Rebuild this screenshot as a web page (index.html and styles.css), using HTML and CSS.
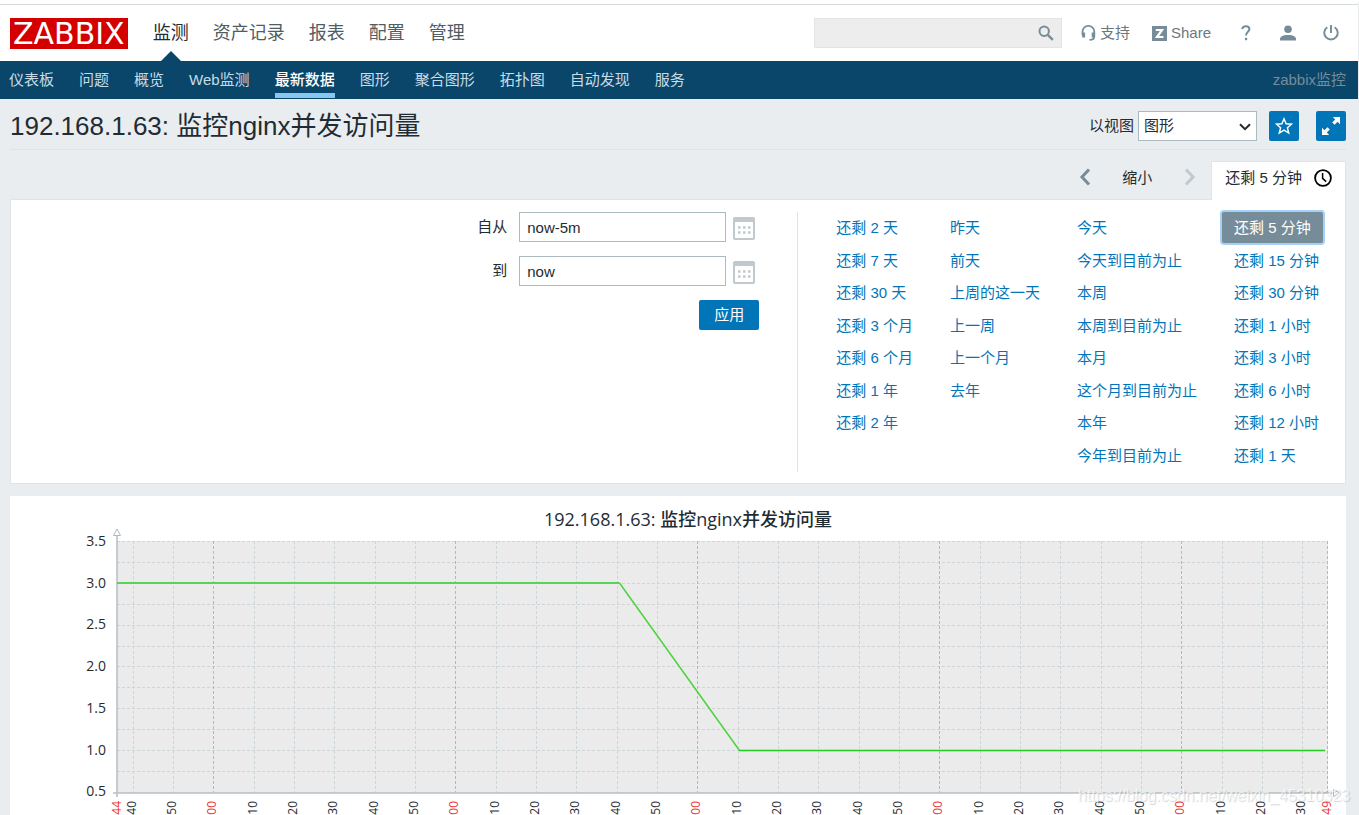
FILE: index.html
```html
<!DOCTYPE html>
<html lang="zh-CN">
<head>
<meta charset="utf-8">
<meta name="viewport" content="width=device-width, initial-scale=1">
<title>192.168.1.63: 监控nginx并发访问量</title>
<link rel="stylesheet" href="styles.css">
</head>
<body>
<header class="header">
  <div class="top-bar">
    <a class="logo" href="#">ZABBIX</a>
    <nav class="main-nav" aria-label="主菜单">
      <a class="main-link active" href="#">监测</a>
      <a class="main-link" href="#">资产记录</a>
      <a class="main-link" href="#">报表</a>
      <a class="main-link" href="#">配置</a>
      <a class="main-link" href="#">管理</a>
    </nav>
    <form class="search">
      <input class="search-input" type="text" aria-label="搜索">
      <button class="search-btn" type="button" aria-label="搜索">
        <svg width="16" height="16" viewBox="0 0 16 16" fill="none" stroke="#768d99"><circle cx="6.2" cy="6.2" r="4.7" stroke-width="2"/><path d="M9.8 9.8L14.8 14.8" stroke-width="2.4"/></svg>
      </button>
    </form>
    <div class="user-nav">
      <a class="user-link" href="#"><svg width="15" height="16" viewBox="0 0 15 16" fill="none" stroke="#768d99" stroke-width="1.8"><path d="M1.500 10V6.800a5.900 5.900 0 0 1 11.800 0V11.500c0 2.200-1.600 3.400-4.800 3.400"/><path d="M2.600 7.500v5M12.200 7.500v5" stroke-width="3"/></svg>支持</a>
      <a class="user-link share" href="#"><svg width="15" height="15" viewBox="0 0 15 15"><path fill="#768d99" d="M0 0h15v15H0z"/><path fill="none" stroke="#fff" stroke-width="2.200" d="M3.800 4h6.200L5 11h6.400"/></svg>Share</a>
      <a class="user-link help" href="#" aria-label="帮助"><svg width="10" height="16" viewBox="0 0 10 16"><path fill="none" stroke="#768d99" stroke-width="2" d="M1.200 4C1.500 2.200 2.800 1.200 4.800 1.200c2.200 0 3.600 1.100 3.600 2.900C8.400 6.800 5 6.900 5 10.600"/><path fill="#768d99" d="M3.900 12.800h2.300v2.400H3.900z"/></svg></a>
      <a class="user-link profile" href="#" aria-label="个人资料"><svg width="16" height="16" viewBox="0 0 16 16" fill="#768d99"><circle cx="8" cy="4.300" r="3.800"/><path d="M0 15.500v-1.500c0-2.600 3.600-4 8-4s8 1.400 8 4v1.500z"/></svg></a>
      <a class="user-link" href="#" aria-label="退出"><svg width="16" height="16" viewBox="0 0 16 16" fill="none" stroke="#768d99" stroke-width="1.900"><path d="M8 0v8M4.300 2.200a6.700 6.700 0 1 0 7.400 0"/></svg></a>
    </div>
  </div>
  <nav class="sub-nav" aria-label="子菜单">
    <a class="sub-link" href="#">仪表板</a>
    <a class="sub-link" href="#">问题</a>
    <a class="sub-link" href="#">概览</a>
    <a class="sub-link" href="#">Web监测</a>
    <a class="sub-link active" href="#">最新数据</a>
    <a class="sub-link" href="#">图形</a>
    <a class="sub-link" href="#">聚合图形</a>
    <a class="sub-link" href="#">拓扑图</a>
    <a class="sub-link" href="#">自动发现</a>
    <a class="sub-link" href="#">服务</a>
    <span class="server-name">zabbix监控</span>
  </nav>
</header>

<main class="content">
  <div class="title-row">
    <h1 class="title">192.168.1.63: 监控nginx并发访问量</h1>
    <label class="view-label" for="view">以视图</label>
    <div class="select-box">
      <select class="view-select" id="view"><option>图形</option></select>
      <svg class="select-arrow" width="12" height="8" viewBox="0 0 12 8" fill="none" stroke="#1f2c33" stroke-width="2"><path d="M1 1.300l5 4.900 5-4.900"/></svg>
    </div>
    <button class="icon-btn" type="button" aria-label="收藏"><svg width="18" height="18" viewBox="0 0 18 18" fill="none" stroke="#fff" stroke-width="1.400"><path d="M9 1.800l2.100 5 5.400.4-4.100 3.500 1.300 5.300L9 13.100 4.300 16l1.300-5.300L1.500 7.200l5.400-.4z"/></svg></button>
    <button class="icon-btn wide" type="button" aria-label="全屏"><svg width="18" height="18" viewBox="0 0 18 18" fill="#fff"><path d="M10.800 0H18v7.200l-2.400-2.400-3 3-2.400-2.400 3-3zM7.200 18H0v-7.200l2.400 2.400 3-3 2.400 2.400-3 3z"/></svg></button>
  </div>

  <div class="time-tabs">
    <button class="step" type="button" aria-label="向前"><svg width="12" height="18" viewBox="0 0 12 18" fill="none" stroke="#768d99" stroke-width="3"><path d="M10 1.500L3 9l7 7.500"/></svg></button>
    <button class="zoom-out" type="button">缩小</button>
    <button class="step next" type="button" aria-label="向后" disabled><svg width="12" height="18" viewBox="0 0 12 18" fill="none" stroke="#c0c9ce" stroke-width="3"><path d="M2 1.500L9 9l-7 7.500"/></svg></button>
    <button class="range-tab" type="button">还剩 5 分钟<svg width="18" height="18" viewBox="0 0 18 18" fill="none" stroke="#000" stroke-width="1.800"><circle cx="9" cy="9" r="7.900"/><path d="M8.600 4v5.300l3.600 3.300" stroke-width="1.500"/></svg></button>
  </div>

  <section class="filter">
    <form class="range-form">
      <label class="range-label" for="from">自从</label>
      <input class="range-input" id="from" type="text" value="now-5m">
      <button class="calendar" type="button" aria-label="选择开始日期"><svg width="22" height="23" viewBox="0 0 22 23"><rect x="1" y="1" width="20" height="21" rx="1" fill="#fff" stroke="#c0c9ce" stroke-width="2"/><path fill="#c0c9ce" d="M1 1h20v4H1z"/><path fill="none" stroke="#c0c9ce" stroke-width="2.500" stroke-dasharray="2.500 2.500" d="M5 10.500h13M5 15.500h13"/></svg></button>
      <label class="range-label" for="to">到</label>
      <input class="range-input" id="to" type="text" value="now">
      <button class="calendar" type="button" aria-label="选择结束日期"><svg width="22" height="23" viewBox="0 0 22 23"><rect x="1" y="1" width="20" height="21" rx="1" fill="#fff" stroke="#c0c9ce" stroke-width="2"/><path fill="#c0c9ce" d="M1 1h20v4H1z"/><path fill="none" stroke="#c0c9ce" stroke-width="2.500" stroke-dasharray="2.500 2.500" d="M5 10.500h13M5 15.500h13"/></svg></button>
      <button class="apply" type="button">应用</button>
    </form>
    <div class="presets">
      <div class="preset-col">
        <a class="preset" href="#">还剩 2 天</a>
        <a class="preset" href="#">还剩 7 天</a>
        <a class="preset" href="#">还剩 30 天</a>
        <a class="preset" href="#">还剩 3 个月</a>
        <a class="preset" href="#">还剩 6 个月</a>
        <a class="preset" href="#">还剩 1 年</a>
        <a class="preset" href="#">还剩 2 年</a>
      </div>
      <div class="preset-col">
        <a class="preset" href="#">昨天</a>
        <a class="preset" href="#">前天</a>
        <a class="preset" href="#">上周的这一天</a>
        <a class="preset" href="#">上一周</a>
        <a class="preset" href="#">上一个月</a>
        <a class="preset" href="#">去年</a>
      </div>
      <div class="preset-col">
        <a class="preset" href="#">今天</a>
        <a class="preset" href="#">今天到目前为止</a>
        <a class="preset" href="#">本周</a>
        <a class="preset" href="#">本周到目前为止</a>
        <a class="preset" href="#">本月</a>
        <a class="preset" href="#">这个月到目前为止</a>
        <a class="preset" href="#">本年</a>
        <a class="preset" href="#">今年到目前为止</a>
      </div>
      <div class="preset-col">
        <a class="preset selected" href="#">还剩 5 分钟</a>
        <a class="preset" href="#">还剩 15 分钟</a>
        <a class="preset" href="#">还剩 30 分钟</a>
        <a class="preset" href="#">还剩 1 小时</a>
        <a class="preset" href="#">还剩 3 小时</a>
        <a class="preset" href="#">还剩 6 小时</a>
        <a class="preset" href="#">还剩 12 小时</a>
        <a class="preset" href="#">还剩 1 天</a>
      </div>
    </div>
  </section>

  <section class="chart-panel">
    <svg class="chart" viewBox="0 0 1336 319" role="img" aria-label="监控nginx并发访问量">
      <text class="chart-title" x="678" y="30">192.168.1.63: 监控nginx并发访问量</text>
      <rect class="plot" x="107" y="45" width="1211" height="252"/>
      <g id="grid"></g>
      <path class="axis" d="M107 40V301M103 297H1322"/>
      <path class="arrow" d="M103.500 39.500h7L107 33zM1323.500 293.500v7l6-3.500z"/>
      <g id="labels"></g>
      <path class="series early" d="M107 87H609.500"/>
      <path class="series slope" d="M609.500 87L729.500 254.500"/>
      <path class="series" d="M729 254.500H1315"/>
    </svg>
  </section>
</main>
<div class="watermark">https://blog.csdn.net/weixin_45310323</div>
<script src="chart.js"></script>
</body>
</html>
```
FILE: styles.css
```css
* { box-sizing: border-box; }

body {
  position: relative;
  margin: 0;
  border-top: 4px solid #fff;
  border-right: 1px solid #e9edf0;
  background: #e9edf0;
  color: #1f2c33;
  font: 15px/20px "Liberation Sans", "Noto Sans CJK SC", sans-serif;
}

a { text-decoration: none; }

button, input, select {
  margin: 0;
  border: 0;
  padding: 0;
  background: none;
  color: inherit;
  font: inherit;
}

svg { display: block; flex: none; }

.header { background: #fff; }

.top-bar {
  display: flex;
  align-items: center;
  height: 57px;
  border-top: 1px solid #d8dbde;
  padding: 0 19px 0 10px;
}

.logo {
  padding: 0 3px;
  background: #d40000;
  color: #fff;
  font: 30px/31px "DejaVu Sans", sans-serif;
}

.main-nav {
  display: flex;
  gap: 24px;
  align-self: stretch;
  margin-left: 25px;
}
.main-link {
  position: relative;
  color: #4f5d65;
  font-size: 18px;
  line-height: 56px;
}
.main-link.active { color: #1f2c33; }
.main-link.active::after {
  content: "";
  position: absolute;
  bottom: 0;
  left: 50%;
  margin-left: -10px;
  border: 10px solid transparent;
  border-top: 0;
  border-bottom-color: #0a466a;
}

.search {
  display: flex;
  align-items: center;
  width: 248px;
  height: 30px;
  margin-left: auto;
  border: 1px solid #e4e4e4;
  background: #ededed;
}
.search-input { flex: 1; min-width: 0; height: 28px; padding: 0 8px; }
.search-btn { margin-right: 7px; }

.user-nav { display: flex; align-items: center; margin-left: 19px; }
.user-link { display: flex; align-items: center; gap: 4px; color: #6b7880; }
.share { margin-left: 22px; }
.help { margin-left: 30px; }
.profile { margin: 0 27px 0 29px; }

.sub-nav {
  display: flex;
  gap: 25px;
  height: 38px;
  padding: 0 12px 0 9px;
  background: #0a466a;
}
.sub-link { position: relative; color: #c8dbe6; line-height: 38px; }
.sub-link.active { color: #fff; font-weight: 500; }
.sub-link.active::after {
  content: "";
  position: absolute;
  right: 0;
  bottom: 1px;
  left: 0;
  height: 5px;
  background: #86c7f2;
}
.server-name { margin-left: auto; color: #768d99; line-height: 38px; }

.content { padding: 0 12px 0 10px; }

.title-row {
  display: flex;
  align-items: center;
  height: 51px;
  padding-top: 4px;
  border-bottom: 1px solid #dfe4e7;
}
.title { flex: 1; margin: 0; font-size: 26px; font-weight: normal; line-height: 38px; }
.view-label { margin-right: 4px; }
.select-box { position: relative; }
.view-select {
  display: block;
  width: 119px;
  height: 30px;
  border: 1px solid #acbbc2;
  padding: 0 5px;
  background: #fff;
  appearance: none;
}
.select-arrow { position: absolute; top: 12px; right: 6px; pointer-events: none; }
.icon-btn {
  display: flex;
  align-items: center;
  justify-content: center;
  width: 30px;
  height: 30px;
  margin-left: 12px;
  border-radius: 2px;
  background: #0275b8;
}
.icon-btn.wide { margin-left: 17px; }

.time-tabs {
  display: flex;
  align-items: flex-start;
  justify-content: flex-end;
  padding-top: 11px;
}
.step { height: 32px; }
.zoom-out { margin: 0 32px 0 31px; line-height: 33px; }
.step.next { margin-right: 15px; }
.range-tab {
  display: flex;
  align-items: center;
  gap: 12px;
  height: 39px;
  margin-bottom: -1px;
  border: 1px solid #dfe4e7;
  border-bottom: 0;
  border-radius: 2px 2px 0 0;
  padding: 0 13px 6px;
  background: #fff;
  z-index: 1;
}

.filter {
  display: flex;
  justify-content: flex-end;
  border: 1px solid #dfe4e7;
  padding: 12px 14px 11px;
  background: #fff;
}
.range-form {
  display: grid;
  grid-template-columns: auto 207px 33px;
  grid-auto-rows: 30px;
  row-gap: 14px;
  align-items: center;
  margin-right: 38px;
}
.range-label { margin-right: 12px; text-align: right; }
.range-input {
  height: 30px;
  border: 1px solid #acbbc2;
  padding: 0 7px;
  background: #fff;
}
.calendar { width: 22px; margin: 3px 0 0 7px; }
.apply {
  grid-column: 1 / -1;
  justify-self: end;
  width: 60px;
  height: 30px;
  border-radius: 2px;
  background: #0275b8;
  color: #fff;
}

.presets {
  display: flex;
  gap: 13px;
  border-left: 1px solid #dfe4e7;
  padding-left: 26px;
}
.preset-col {
  display: grid;
  grid-template-rows: repeat(8, 1fr);
  justify-items: start;
  height: 260px;
}
.preset { padding: 0 12px; color: #0275b8; line-height: 31px; align-self: start; }
.preset.selected {
  border-radius: 2px;
  background: #768d99;
  box-shadow: 0 0 0 2px #a8d0f5;
  color: #fff;
}

.chart-panel { margin-top: 12px; background: #fff; }
.chart { width: 100%; height: auto; overflow: hidden; }
.chart-title {
  fill: #1f2c33;
  font: 500 18px "Open Sans", "Noto Sans CJK SC", sans-serif;
  text-anchor: middle;
}
.plot { fill: #ebebeb; }
.grid-line { stroke: #ccd5d9; stroke-dasharray: 3 2; }
.grid-line.minute { stroke: #acbbc2; }
.axis { fill: none; stroke: #b5c0c6; stroke-width: 1.5; }
.arrow { fill: #fff; stroke: #acbbc2; }
.tick { fill: #1f2c33; font: 500 14px "Open Sans", sans-serif; text-anchor: end; }
.tick.time { font-size: 12px; }
.tick.minute { fill: #e33; }
.series { fill: none; stroke: #22cc22; stroke-width: 1.5; }
.series.early { stroke: #58d358; stroke-width: 2; }
.series.slope { stroke: #4bd43f; }

.watermark {
  position: absolute;
  right: 8px;
  bottom: 9px;
  color: rgba(255, 255, 255, 0.7);
  font-size: 16px;
  text-shadow: 1px 1px 1px rgba(110, 120, 130, 0.3);
}
```
FILE: chart.js
```javascript
const SVG_NS = "http://www.w3.org/2000/svg";
const plot = { left: 107, right: 1318, top: 45, bottom: 297 };

function add(parent, name, attrs, text) {
  const node = document.createElementNS(SVG_NS, name);
  for (const key in attrs) node.setAttribute(key, attrs[key]);
  if (text) node.textContent = text;
  parent.appendChild(node);
}

const grid = document.getElementById("grid");
const labels = document.getElementById("labels");

// Value axis: a grid line per quarter, a label per half.
for (let i = 0; i < 12; i++) {
  const y = Math.round(plot.top + i * 20.9) + 0.5;
  add(grid, "line", { class: "grid-line", x1: plot.left, x2: plot.right, y1: y, y2: y });
}
for (let i = 0; i < 7; i++) {
  const y = Math.round(50 + i * 41.7);
  add(labels, "text", { class: "tick", x: 96, y }, (3.5 - i * 0.5).toFixed(1));
}

// Time axis: a grid line every ten seconds, full minutes in red.
function timeLabel(x, text, minute) {
  add(labels, "text", {
    class: "tick time" + (minute ? " minute" : ""),
    transform: `translate(${x + 4} 305) rotate(-90)`
  }, text);
}
for (let i = 0; i < 30; i++) {
  const x = Math.round(122.6 + i * 40.33) + 0.5;
  const seconds = (40 + i * 10) % 60;
  const minute = seconds === 0;
  add(grid, "line", {
    class: "grid-line" + (minute ? " minute" : ""),
    x1: x, x2: x, y1: plot.top, y2: plot.bottom
  });
  timeLabel(x - 2, minute ? "00" : String(seconds), minute);
}
add(grid, "line", { class: "grid-line minute", x1: 1317.5, x2: 1317.5, y1: plot.top, y2: plot.bottom });
timeLabel(107, "44", true);
timeLabel(1317, "49", true);
```
